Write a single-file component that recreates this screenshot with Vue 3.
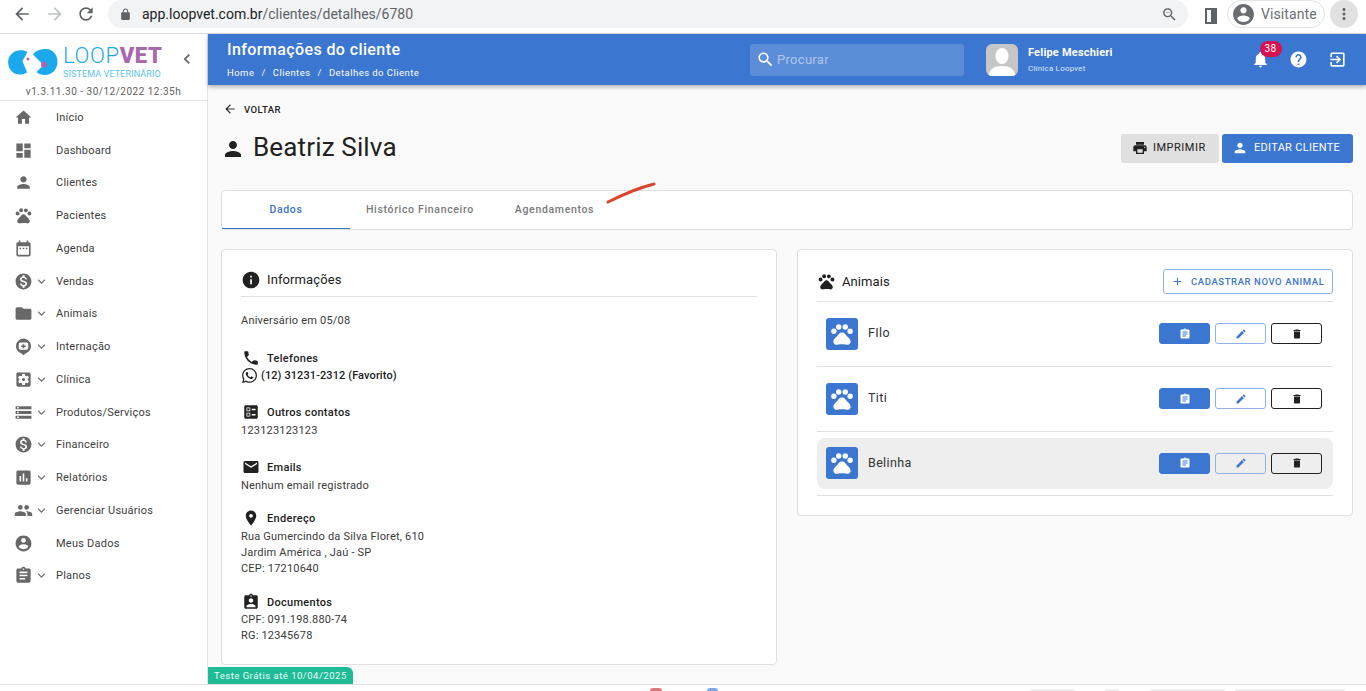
<template>
  <div class="page">
    <div class="browser-bar">
      <svg class="nav-icon" viewBox="0 0 24 24"><path :d="icons.back" /></svg>
      <svg class="nav-icon forward" viewBox="0 0 24 24"><path :d="icons.forward" /></svg>
      <svg class="nav-icon reload" viewBox="0 0 24 24"><path :d="icons.refresh" /></svg>
      <div class="omnibox">
        <svg class="lock" viewBox="0 0 24 24"><path :d="icons.lock" /></svg>
        <span class="url">app.loopvet.com.br<span class="url-path">/clientes/detalhes/6780</span></span>
        <svg class="zoom-icon" viewBox="0 0 24 24"><path :d="icons.zoomOut" /></svg>
      </div>
      <span class="side-panel"></span>
      <div class="guest-chip">
        <svg viewBox="0 0 24 24"><path :d="icons.account" /></svg>
        <span>Visitante</span>
      </div>
      <div class="menu-dots">
        <svg viewBox="0 0 24 24"><path :d="icons.more" /></svg>
      </div>
    </div>

    <div class="app">
      <aside class="sidebar">
        <div class="brand">
          <div class="logo-row">
            <svg class="logo-mark" viewBox="0 0 50 28">
              <path d="M19.5 3L14.5 12L19 23.5C15 26 8 27 3.5 22C-1 17-1 9 3.5 5C8 .5 15 .5 19.5 3z" fill="#1ba9ee" />
              <path d="M25 5.5C28 1 34 0 38 0C45 0 49.5 6 49.5 13C49.5 20 44 26 37 26C33.5 26 30.5 25 28.5 23L35.5 16z" fill="#1ba9ee" />
              <circle cx="20" cy="10" r="1.5" fill="#a768ad" />
              <circle cx="36" cy="15.5" r="3" fill="#a768ad" />
            </svg>
            <div class="logo-text">
              <div class="logo-name">LOOP<b>VET</b></div>
              <div class="logo-sub">SISTEMA VETERINÁRIO</div>
            </div>
            <svg class="collapse" viewBox="0 0 24 24"><path :d="icons.chevronLeft" /></svg>
          </div>
          <div class="version">v1.3.11.30 - 30/12/2022 12:35h</div>
        </div>
        <nav class="menu">
          <div v-for="item in menu" :key="item.label" class="menu-item">
            <svg class="menu-icon" viewBox="0 0 24 24"><path :d="icons[item.icon]" fill-rule="evenodd" /></svg>
            <svg v-if="item.sub" class="menu-chevron" viewBox="0 0 24 24"><path :d="icons.expand" /></svg>
            <span class="menu-label">{{ item.label }}</span>
          </div>
        </nav>
      </aside>

      <main class="main">
        <header class="topbar">
          <div class="topbar-title">
            <div class="page-title">Informações do cliente</div>
            <div class="crumbs">
              <span>Home</span><i>/</i><span>Clientes</span><i>/</i><span>Detalhes do Cliente</span>
            </div>
          </div>
          <div class="search">
            <svg viewBox="0 0 24 24"><path :d="icons.search" /></svg>
            <span>Procurar</span>
          </div>
          <div class="avatar">
            <svg viewBox="0 0 32 32">
              <ellipse cx="16" cy="12" rx="6.5" ry="8" fill="#fff" />
              <path d="M3 32c0-7 5-10 13-10s13 3 13 10z" fill="#fff" />
            </svg>
          </div>
          <div class="user">
            <div class="user-name">Felipe Meschieri</div>
            <div class="user-clinic">Clínica Loopvet</div>
          </div>
          <div class="top-actions">
            <div class="bell">
              <svg viewBox="0 0 24 24"><path :d="icons.bell" /></svg>
              <span class="badge">38</span>
            </div>
            <svg viewBox="0 0 24 24"><path :d="icons.help" /></svg>
            <svg viewBox="0 0 24 24"><path :d="icons.exit" /></svg>
          </div>
        </header>

        <div class="content">
          <div class="back-link">
            <svg viewBox="0 0 24 24"><path :d="icons.back" /></svg>
            <span>VOLTAR</span>
          </div>

          <div class="client-row">
            <svg class="client-icon" viewBox="0 0 24 24"><path :d="icons.person" /></svg>
            <h1 class="client-name">Beatriz Silva</h1>
            <button class="btn btn-grey">
              <svg viewBox="0 0 24 24"><path :d="icons.print" /></svg>IMPRIMIR
            </button>
            <button class="btn btn-blue">
              <svg viewBox="0 0 24 24"><path :d="icons.person" /></svg>EDITAR CLIENTE
            </button>
          </div>

          <div class="tabs">
            <div class="tab active">Dados</div>
            <div class="tab">Histórico Financeiro</div>
            <div class="tab">Agendamentos</div>
            <svg class="scribble" viewBox="0 0 50 22">
              <path d="M2 20C16 13 32 6 48 2" fill="none" stroke="#d9452f" stroke-width="3" stroke-linecap="round" />
            </svg>
          </div>

          <div class="columns">
            <section class="card info-card">
              <div class="card-head">
                <svg viewBox="0 0 24 24"><path :d="icons.info" /></svg>
                <span>Informações</span>
              </div>
              <p class="line birthday">Aniversário em 05/08</p>

              <div class="block">
                <div class="block-head"><svg viewBox="0 0 24 24"><path :d="icons.call" /></svg>Telefones</div>
                <div class="phone">
                  <svg viewBox="0 0 24 24"><path :d="icons.whatsapp" /></svg>(12) 31231-2312 (Favorito)
                </div>
              </div>
              <div class="block">
                <div class="block-head"><svg viewBox="0 0 24 24"><path :d="icons.ballot" /></svg>Outros contatos</div>
                <p class="line">123123123123</p>
              </div>
              <div class="block tight">
                <div class="block-head"><svg viewBox="0 0 24 24"><path :d="icons.email" /></svg>Emails</div>
                <p class="line">Nenhum email registrado</p>
              </div>
              <div class="block near">
                <div class="block-head"><svg viewBox="0 0 24 24"><path :d="icons.place" /></svg>Endereço</div>
                <p class="line">Rua Gumercindo da Silva Floret, 610</p>
                <p class="line">Jardim América , Jaú - SP</p>
                <p class="line">CEP: 17210640</p>
              </div>
              <div class="block docs">
                <div class="block-head"><svg viewBox="0 0 24 24"><path :d="icons.badge" /></svg>Documentos</div>
                <p class="line">CPF: 091.198.880-74</p>
                <p class="line">RG: 12345678</p>
              </div>
            </section>

            <section class="card animals-card">
              <div class="animals-head">
                <svg viewBox="0 0 24 24"><path :d="icons.pets" /></svg>
                <span>Animais</span>
                <button class="btn-new">
                  <svg viewBox="0 0 24 24"><path :d="icons.add" /></svg>CADASTRAR NOVO ANIMAL
                </button>
              </div>
              <div v-for="animal in animals" :key="animal.name" class="animal-wrap">
                <div :class="['animal', { hovered: animal.hovered }]">
                  <div class="animal-icon">
                    <svg viewBox="0 0 24 24"><path :d="icons.pets" /></svg>
                  </div>
                  <span class="animal-name">{{ animal.name }}</span>
                  <div class="animal-actions">
                    <button class="act act-fill"><svg viewBox="0 0 24 24"><path :d="icons.assignment" /></svg></button>
                    <button class="act act-edit"><svg viewBox="0 0 24 24"><path :d="icons.edit" /></svg></button>
                    <button class="act act-del"><svg viewBox="0 0 24 24"><path :d="icons.trash" /></svg></button>
                  </div>
                </div>
              </div>
            </section>
          </div>
        </div>

        <div class="trial">Teste Grátis até 10/04/2025</div>
      </main>
    </div>

    <div class="shelf">
      <i class="peek red"></i>
      <i class="peek blue"></i>
      <i class="peek grey one"></i>
      <i class="peek grey two"></i>
      <i class="peek grey three"></i>
      <i class="peek grey four"></i>
    </div>
  </div>
</template>

<script setup>
const icons = {
  back: 'M20 11H7.83l5.59-5.59L12 4l-8 8 8 8 1.41-1.41L7.83 13H20v-2z',
  forward: 'M12 4l-1.41 1.41L16.17 11H4v2h12.17l-5.58 5.59L12 20l8-8z',
  refresh: 'M17.65 6.35C16.2 4.9 14.21 4 12 4c-4.42 0-7.99 3.58-7.99 8s3.57 8 7.99 8c3.73 0 6.84-2.55 7.73-6h-2.08c-.82 2.33-3.04 4-5.65 4-3.31 0-6-2.69-6-6s2.69-6 6-6c1.66 0 3.14.69 4.22 1.78L13 11h7V4l-2.35 2.35z',
  lock: 'M18 8h-1V6c0-2.76-2.24-5-5-5S7 3.24 7 6v2H6c-1.1 0-2 .9-2 2v10c0 1.1.9 2 2 2h12c1.1 0 2-.9 2-2V10c0-1.1-.9-2-2-2zm-2.9 0H8.9V6c0-1.71 1.39-3.1 3.1-3.1 1.71 0 3.1 1.39 3.1 3.1v2z',
  zoomOut: 'M15.5 14h-.79l-.28-.27C15.41 12.59 16 11.11 16 9.5 16 5.91 13.09 3 9.5 3S3 5.91 3 9.5 5.91 16 9.5 16c1.61 0 3.09-.59 4.23-1.57l.27.28v.79l5 4.99L20.49 19l-4.99-5zm-6 0C7.01 14 5 11.99 5 9.5S7.01 5 9.5 5 14 7.01 14 9.5 11.99 14 9.5 14zM7 9h5v1H7z',
  account: 'M12 2C6.48 2 2 6.48 2 12s4.48 10 10 10 10-4.48 10-10S17.52 2 12 2zm0 3c1.66 0 3 1.34 3 3s-1.34 3-3 3-3-1.34-3-3 1.34-3 3-3zm0 14.2c-2.5 0-4.71-1.28-6-3.22.03-1.99 4-3.08 6-3.08 1.99 0 5.97 1.09 6 3.08-1.29 1.94-3.5 3.22-6 3.22z',
  more: 'M12 8c1.1 0 2-.9 2-2s-.9-2-2-2-2 .9-2 2 .9 2 2 2zm0 2c-1.1 0-2 .9-2 2s.9 2 2 2 2-.9 2-2-.9-2-2-2zm0 6c-1.1 0-2 .9-2 2s.9 2 2 2 2-.9 2-2-.9-2-2-2z',
  search: 'M15.5 14h-.79l-.28-.27C15.41 12.59 16 11.11 16 9.5 16 5.91 13.09 3 9.5 3S3 5.91 3 9.5 5.91 16 9.5 16c1.61 0 3.09-.59 4.23-1.57l.27.28v.79l5 4.99L20.49 19l-4.99-5zm-6 0C7.01 14 5 11.99 5 9.5S7.01 5 9.5 5 14 7.01 14 9.5 11.99 14 9.5 14z',
  bell: 'M12 22c1.1 0 2-.9 2-2h-4c0 1.1.89 2 2 2zm6-6v-5c0-3.07-1.64-5.64-4.5-6.32V4c0-.83-.67-1.5-1.5-1.5s-1.5.67-1.5 1.5v.68C7.63 5.36 6 7.92 6 11v5l-2 2v1h16v-1l-2-2z',
  help: 'M12 2C6.48 2 2 6.48 2 12s4.48 10 10 10 10-4.48 10-10S17.52 2 12 2zm1 17h-2v-2h2v2zm2.07-7.75l-.9.92C13.45 12.9 13 13.5 13 15h-2v-.5c0-1.1.45-2.1 1.17-2.83l1.24-1.26c.37-.36.59-.86.59-1.41 0-1.1-.9-2-2-2s-2 .9-2 2H8c0-2.21 1.79-4 4-4s4 1.79 4 4c0 .88-.36 1.68-.93 2.25z',
  exit: 'M10.09 15.59L11.5 17l5-5-5-5-1.41 1.41L12.67 11H3v2h9.67l-2.58 2.59zM19 3H5c-1.11 0-2 .9-2 2v4h2V5h14v14H5v-4H3v4c0 1.1.89 2 2 2h14c1.1 0 2-.9 2-2V5c0-1.1-.9-2-2-2z',
  home: 'M10 20v-6h4v6h5v-8h3L12 3 2 12h3v8z',
  dashboard: 'M3 13h8V3H3v10zm0 8h8v-6H3v6zm10 0h8V11h-8v10zm0-18v6h8V3h-8z',
  person: 'M12 12c2.21 0 4-1.79 4-4s-1.79-4-4-4-4 1.79-4 4 1.79 4 4 4zm0 2c-2.67 0-8 1.34-8 4v2h16v-2c0-2.66-5.33-4-8-4z',
  pets: 'M2 9.5a2.5 2.5 0 1 0 5 0a2.5 2.5 0 1 0-5 0zM6.5 5.5a2.5 2.5 0 1 0 5 0a2.5 2.5 0 1 0-5 0zM12.5 5.5a2.5 2.5 0 1 0 5 0a2.5 2.5 0 1 0-5 0zM17 9.5a2.5 2.5 0 1 0 5 0a2.5 2.5 0 1 0-5 0zM17.34 14.86c-.87-1.02-1.6-1.89-2.48-2.91-.46-.54-1.05-1.08-1.75-1.32-.11-.04-.22-.07-.33-.09-.25-.04-.52-.04-.78-.04s-.53 0-.79.05c-.11.02-.22.05-.33.09-.7.24-1.28.78-1.75 1.32-.87 1.02-1.6 1.89-2.48 2.91-1.31 1.31-2.92 2.76-2.62 4.79.29 1.02 1.02 2.03 2.33 2.32.73.15 3.06-.44 5.54-.44h.18c2.48 0 4.81.58 5.54.44 1.31-.29 2.04-1.31 2.33-2.32.31-2.04-1.3-3.49-2.61-4.8z',
  calendar: 'M9 11H7v2h2v-2zm4 0h-2v2h2v-2zm4 0h-2v2h2v-2zm2-7h-1V2h-2v2H8V2H6v2H5c-1.11 0-1.99.9-1.99 2L3 20c0 1.1.89 2 2 2h14c1.1 0 2-.9 2-2V6c0-1.1-.9-2-2-2zm0 16H5V9h14v11z',
  money: 'M12 2C6.48 2 2 6.48 2 12s4.48 10 10 10 10-4.48 10-10S17.52 2 12 2zm1.41 16.09V20h-2.67v-1.93c-1.71-.36-3.16-1.46-3.27-3.4h1.96c.1 1.05.82 1.87 2.65 1.87 1.96 0 2.4-.98 2.4-1.59 0-.83-.44-1.61-2.67-2.14-2.48-.6-4.18-1.62-4.18-3.67 0-1.72 1.39-2.84 3.11-3.21V4h2.67v1.95c1.86.45 2.79 1.86 2.85 3.39H14.3c-.05-1.11-.64-1.87-2.22-1.87-1.5 0-2.4.68-2.4 1.64 0 .84.65 1.39 2.67 1.91s4.18 1.39 4.18 3.91c-.01 1.83-1.38 2.83-3.12 3.16z',
  folder: 'M10 4H4c-1.1 0-1.99.9-1.99 2L2 18c0 1.1.9 2 2 2h16c1.1 0 2-.9 2-2V8c0-1.1-.9-2-2-2h-8l-2-2z',
  hospital: 'M12 2a9.5 9.5 0 0 0-3 18.5L12 23l3-2.5A9.5 9.5 0 0 0 12 2zM8 7h8a2 2 0 0 1 2 2v5a2 2 0 0 1-2 2H8a2 2 0 0 1-2-2V9a2 2 0 0 1 2-2zM11 9v1.7H9.2v1.8H11v1.7h2v-1.7h1.8v-1.8H13V9z',
  clinic: 'M12 10c-1.1 0-2 .9-2 2s.9 2 2 2 2-.9 2-2-.9-2-2-2zm7-7H5c-1.11 0-2 .9-2 2v14c0 1.1.89 2 2 2h14c1.11 0 2-.9 2-2V5c0-1.1-.89-2-2-2zm-1.75 9c0 .23-.02.46-.05.68l1.48 1.16c.13.11.17.3.08.45l-1.4 2.42c-.09.15-.27.21-.43.15l-1.74-.7c-.36.28-.76.51-1.18.69l-.26 1.85c-.03.17-.18.3-.35.3h-2.8c-.17 0-.32-.13-.35-.29l-.26-1.85c-.43-.18-.82-.41-1.18-.69l-1.74.7c-.16.06-.34 0-.43-.15l-1.4-2.42c-.09-.15-.05-.34.08-.45l1.48-1.16c-.03-.23-.05-.46-.05-.69 0-.23.02-.46.05-.68l-1.48-1.16c-.13-.11-.17-.3-.08-.45l1.4-2.42c.09-.15.27-.21.43-.15l1.74.7c.36-.28.76-.51 1.18-.69l.26-1.85c.03-.17.18-.3.35-.3h2.8c.17 0 .32.13.35.29l.26 1.85c.43.18.82.41 1.18.69l1.74-.7c.16-.06.34 0 .43.15l1.4 2.42c.09.15.05.34-.08.45l-1.48 1.16c.03.23.05.46.05.69z',
  storage: 'M2 20h20v-4H2v4zm2-3h2v2H4v-2zM2 4v4h20V4H2zm4 3H4V5h2v2zm-4 7h20v-4H2v4zm2-3h2v2H4v-2z',
  report: 'M19 3H5c-1.1 0-2 .9-2 2v14c0 1.1.9 2 2 2h14c1.1 0 2-.9 2-2V5c0-1.1-.9-2-2-2zM9 17H7v-7h2v7zm4 0h-2V7h2v10zm4 0h-2v-4h2v4z',
  people: 'M16 11c1.66 0 2.99-1.34 2.99-3S17.66 5 16 5c-1.66 0-3 1.34-3 3s1.34 3 3 3zm-8 0c1.66 0 2.99-1.34 2.99-3S9.66 5 8 5C6.34 5 5 6.34 5 8s1.34 3 3 3zm0 2c-2.33 0-7 1.17-7 3.5V19h14v-2.5c0-2.33-4.67-3.5-7-3.5zm8 0c-.29 0-.62.02-.97.05 1.16.84 1.97 1.97 1.97 3.45V19h6v-2.5c0-2.33-4.67-3.5-7-3.5z',
  assignment: 'M19 3h-4.18C14.4 1.84 13.3 1 12 1c-1.3 0-2.4.84-2.82 2H5c-1.1 0-2 .9-2 2v14c0 1.1.9 2 2 2h14c1.1 0 2-.9 2-2V5c0-1.1-.9-2-2-2zm-7 0c.55 0 1 .45 1 1s-.45 1-1 1-1-.45-1-1 .45-1 1-1zm2 14H7v-2h7v2zm3-4H7v-2h10v2zm0-4H7V7h10v2z',
  info: 'M12 2C6.48 2 2 6.48 2 12s4.48 10 10 10 10-4.48 10-10S17.52 2 12 2zm1 15h-2v-6h2v6zm0-8h-2V7h2v2z',
  call: 'M6.62 10.79c1.44 2.83 3.76 5.14 6.59 6.59l2.2-2.2c.27-.27.67-.36 1.02-.24 1.12.37 2.33.57 3.57.57.55 0 1 .45 1 1V20c0 .55-.45 1-1 1-9.39 0-17-7.61-17-17 0-.55.45-1 1-1h3.5c.55 0 1 .45 1 1 0 1.25.2 2.45.57 3.57.11.35.03.74-.25 1.02l-2.2 2.2z',
  whatsapp: 'M17.472 14.382c-.297-.149-1.758-.867-2.03-.967-.273-.099-.471-.148-.67.15-.197.297-.767.966-.94 1.164-.173.199-.347.223-.644.075-.297-.15-1.255-.463-2.39-1.475-.883-.788-1.48-1.761-1.653-2.059-.173-.297-.018-.458.13-.606.134-.133.298-.347.446-.52.149-.174.198-.298.298-.497.099-.198.05-.371-.025-.52-.075-.149-.669-1.612-.916-2.207-.242-.579-.487-.5-.669-.51-.173-.008-.371-.01-.57-.01-.198 0-.52.074-.792.372-.272.297-1.04 1.016-1.04 2.479 0 1.462 1.065 2.875 1.213 3.074.149.198 2.096 3.2 5.077 4.487.709.306 1.262.489 1.694.625.712.227 1.36.195 1.871.118.571-.085 1.758-.719 2.006-1.413.248-.694.248-1.289.173-1.413-.074-.124-.272-.198-.57-.347m-5.421 7.403h-.004a9.87 9.87 0 01-5.031-1.378l-.361-.214-3.741.982.998-3.648-.235-.374a9.86 9.86 0 01-1.51-5.26c.001-5.45 4.436-9.884 9.888-9.884 2.64 0 5.122 1.03 6.988 2.898a9.825 9.825 0 012.893 6.994c-.003 5.45-4.437 9.884-9.885 9.884m8.413-18.297A11.815 11.815 0 0012.05 0C5.495 0 .16 5.335.157 11.892c0 2.096.547 4.142 1.588 5.945L.057 24l6.305-1.654a11.882 11.882 0 005.683 1.448h.005c6.554 0 11.89-5.335 11.893-11.893a11.821 11.821 0 00-3.48-8.413z',
  ballot: 'M13 9.5h5v-2h-5v2zm0 7h5v-2h-5v2zm6 4.5H5c-1.1 0-2-.9-2-2V5c0-1.1.9-2 2-2h14c1.1 0 2 .9 2 2v14c0 1.1-.9 2-2 2zM6 11h5V6H6v5zm1-4h3v3H7V7zM6 18h5v-5H6v5zm1-4h3v3H7v-3z',
  email: 'M20 4H4c-1.1 0-1.99.9-1.99 2L2 18c0 1.1.9 2 2 2h16c1.1 0 2-.9 2-2V6c0-1.1-.9-2-2-2zm0 4l-8 5-8-5V6l8 5 8-5v2z',
  place: 'M12 2C8.13 2 5 5.13 5 9c0 5.25 7 13 7 13s7-7.75 7-13c0-3.87-3.13-7-7-7zm0 9.5c-1.38 0-2.5-1.12-2.5-2.5s1.12-2.5 2.5-2.5 2.5 1.12 2.5 2.5-1.12 2.5-2.5 2.5z',
  badge: 'M19 3h-4.18C14.4 1.84 13.3 1 12 1c-1.3 0-2.4.84-2.82 2H5c-1.1 0-2 .9-2 2v14c0 1.1.9 2 2 2h14c1.1 0 2-.9 2-2V5c0-1.1-.9-2-2-2zm-7 0c.55 0 1 .45 1 1s-.45 1-1 1-1-.45-1-1 .45-1 1-1zm0 4c1.66 0 3 1.34 3 3s-1.34 3-3 3-3-1.34-3-3 1.34-3 3-3zm6 12H6v-1.4c0-2 4-3.1 6-3.1s6 1.1 6 3.1V19z',
  print: 'M19 8H5c-1.66 0-3 1.34-3 3v6h4v4h12v-4h4v-6c0-1.66-1.34-3-3-3zm-3 11H8v-5h8v5zm3-7c-.55 0-1-.45-1-1s.45-1 1-1 1 .45 1 1-.45 1-1 1zm-1-9H6v4h12V3z',
  edit: 'M3 17.25V21h3.75L17.81 9.94l-3.75-3.75L3 17.25zM20.71 7.04c.39-.39.39-1.02 0-1.41l-2.34-2.34c-.39-.39-1.02-.39-1.41 0l-1.83 1.83 3.75 3.75 1.83-1.83z',
  trash: 'M6 19c0 1.1.9 2 2 2h8c1.1 0 2-.9 2-2V7H6v12zM19 4h-3.5l-1-1h-5l-1 1H5v2h14V4z',
  add: 'M19 13h-6v6h-2v-6H5v-2h6V5h2v6h6v2z',
  chevronLeft: 'M15.41 7.41L14 6l-6 6 6 6 1.41-1.41L10.83 12z',
  expand: 'M16.59 8.59L12 13.17 7.41 8.59 6 10l6 6 6-6z'
}

const menu = [
  { label: 'Início', icon: 'home' },
  { label: 'Dashboard', icon: 'dashboard' },
  { label: 'Clientes', icon: 'person' },
  { label: 'Pacientes', icon: 'pets' },
  { label: 'Agenda', icon: 'calendar' },
  { label: 'Vendas', icon: 'money', sub: true },
  { label: 'Animais', icon: 'folder', sub: true },
  { label: 'Internação', icon: 'hospital', sub: true },
  { label: 'Clínica', icon: 'clinic', sub: true },
  { label: 'Produtos/Serviços', icon: 'storage', sub: true },
  { label: 'Financeiro', icon: 'money', sub: true },
  { label: 'Relatórios', icon: 'report', sub: true },
  { label: 'Gerenciar Usuários', icon: 'people', sub: true },
  { label: 'Meus Dados', icon: 'account' },
  { label: 'Planos', icon: 'assignment', sub: true }
]

const animals = [
  { name: 'FIlo' },
  { name: 'Titi' },
  { name: 'Belinha', hovered: true }
]
</script>

<style scoped>
.page {
  width: 1366px;
  height: 691px;
  overflow: hidden;
  display: flex;
  flex-direction: column;
  font-family: Roboto, "Liberation Sans", sans-serif;
  color: #212121;
  background: #fff;
}

svg {
  display: block;
  flex-shrink: 0;
  fill: currentColor;
}

/* browser */
.browser-bar {
  height: 34px;
  flex-shrink: 0;
  display: flex;
  align-items: flex-start;
  background: #fff;
  border-bottom: 1px solid #dadce0;
  box-sizing: border-box;
  color: #5f6368;
}

.nav-icon {
  width: 20px;
  height: 20px;
  margin: 4px 0 0 12px;
}

.nav-icon.forward {
  margin-left: 13px;
  color: #bdc1c6;
}

.nav-icon.reload {
  margin-left: 11px;
}

.omnibox {
  width: 1080px;
  height: 28px;
  margin-left: 12px;
  padding-left: 11px;
  box-sizing: border-box;
  display: flex;
  align-items: center;
  background: #f1f3f4;
  border-radius: 14px;
}

.lock {
  width: 13px;
  height: 13px;
}

.url {
  margin-left: 10px;
  font-size: 14px;
  color: #202124;
}

.url-path {
  color: #5f6368;
}

.zoom-icon {
  width: 17px;
  height: 17px;
  margin-left: auto;
  margin-right: 10px;
}

.side-panel {
  height: 12px;
  margin: 8px 0 0 17px;
  border: 2px solid #5f6368;
  border-right-width: 6px;
  width: 4px;
}

.guest-chip {
  width: 98px;
  height: 28px;
  margin-left: 10px;
  padding-left: 3px;
  box-sizing: border-box;
  display: flex;
  align-items: center;
  border: 1px solid #e3e4e6;
  border-radius: 14px;
  font-size: 14px;
  color: #6a6e73;
  letter-spacing: 0.1px;
}

.guest-chip svg {
  width: 25px;
  height: 25px;
  margin-right: 5px;
}

.menu-dots {
  width: 28px;
  height: 28px;
  margin-left: 5px;
  border-radius: 50%;
  background: #e1e1e1;
  display: flex;
  align-items: center;
  justify-content: center;
}

.menu-dots svg {
  width: 18px;
  height: 18px;
}

.app {
  flex: 1;
  display: flex;
  min-height: 0;
}

/* sidebar */
.sidebar {
  width: 208px;
  flex-shrink: 0;
  box-sizing: border-box;
  border-right: 1px solid #e4e4e4;
  background: #fff;
}

.brand {
  height: 67px;
  box-sizing: border-box;
  border-bottom: 1px solid #e4e4e4;
}

.logo-row {
  height: 51px;
  box-sizing: border-box;
  display: flex;
  align-items: flex-start;
  padding: 15px 0 0 8px;
}

.logo-mark {
  width: 50px;
  height: 28px;
}

.logo-text {
  margin: -6px 0 0 5px;
}

.logo-name {
  font-size: 22px;
  line-height: 26px;
  font-weight: 300;
  letter-spacing: 0.6px;
  color: #1ba9ee;
  white-space: nowrap;
}

.logo-name b {
  font-weight: 900;
  color: #a768ad;
}

.logo-sub {
  font-size: 9px;
  line-height: 11px;
  letter-spacing: 0.12px;
  color: #5cc4f2;
  white-space: nowrap;
}

.collapse {
  width: 20px;
  height: 20px;
  margin: 0 0 0 15px;
  color: #616161;
}

.version {
  text-align: center;
  font-size: 10px;
  line-height: 14px;
  letter-spacing: 0.5px;
  color: #616161;
}

.menu-item {
  height: 32.75px;
  display: flex;
  align-items: center;
  padding-left: 14px;
  position: relative;
}

.menu-icon {
  width: 19px;
  height: 19px;
  color: #686868;
}

.menu-chevron {
  position: absolute;
  left: 34px;
  width: 15px;
  height: 15px;
  color: #757575;
}

.menu-label {
  position: absolute;
  left: 56px;
  font-size: 11px;
  letter-spacing: 0.23px;
  color: #3d3d3d;
  white-space: nowrap;
}

/* main */
.main {
  flex: 1;
  min-width: 0;
  position: relative;
  display: flex;
  flex-direction: column;
  background: #fafafa;
}

.topbar {
  height: 51px;
  flex-shrink: 0;
  display: flex;
  align-items: center;
  padding-left: 19px;
  background: #3b76d1;
  color: #fff;
  box-shadow: 0 2px 4px rgba(0, 0, 0, 0.3);
  position: relative;
  z-index: 2;
}

.topbar-title {
  width: 523px;
  flex-shrink: 0;
}

.page-title {
  font-size: 16px;
  line-height: 20px;
  font-weight: 500;
  letter-spacing: 0.4px;
}

.crumbs {
  margin-top: 7px;
  display: flex;
  font-size: 9.5px;
  line-height: 12px;
  letter-spacing: 0.45px;
}

.crumbs i {
  font-style: normal;
  margin: 0 7px;
}

.search {
  width: 214px;
  height: 32px;
  flex-shrink: 0;
  display: flex;
  align-items: center;
  padding-left: 6px;
  box-sizing: border-box;
  background: rgba(255, 255, 255, 0.17);
  border-radius: 3px;
  font-size: 13px;
  letter-spacing: 0.3px;
  color: rgba(255, 255, 255, 0.5);
}

.search svg {
  width: 19px;
  height: 19px;
  margin-right: 2px;
  color: #fff;
}

.avatar {
  width: 32px;
  height: 32px;
  margin-left: 22px;
  flex-shrink: 0;
  background: #c6c6c6;
  border-radius: 6px;
  overflow: hidden;
}

.user {
  margin-left: 10px;
}

.user-name {
  font-size: 11px;
  line-height: 14px;
  font-weight: 700;
  letter-spacing: 0.2px;
}

.user-clinic {
  margin-top: 4px;
  font-size: 8px;
  line-height: 10px;
  color: #dfe9f8;
  letter-spacing: 0.2px;
}

.top-actions {
  margin-left: auto;
  margin-right: 19.5px;
  display: flex;
  align-items: center;
  gap: 19.5px;
}

.top-actions svg {
  width: 19px;
  height: 19px;
}

.bell {
  position: relative;
}

.badge {
  position: absolute;
  left: 9px;
  top: -9px;
  width: 22px;
  height: 16px;
  background: #d5114f;
  border-radius: 8px;
  font-size: 10px;
  line-height: 16px;
  text-align: center;
  letter-spacing: 0.3px;
}

.content {
  flex: 1;
  min-height: 0;
  padding: 17px 13px 0;
}

.back-link {
  height: 14px;
  display: flex;
  align-items: center;
  font-size: 9.5px;
  font-weight: 500;
  letter-spacing: 0.45px;
  color: #212121;
}

.back-link svg {
  width: 14px;
  height: 14px;
  margin: 0 7px 0 2px;
  color: #333;
}

.client-row {
  margin-top: 18px;
  height: 29px;
  display: flex;
  align-items: center;
}

.client-icon {
  width: 24px;
  height: 24px;
  margin-right: 8px;
}

.client-name {
  margin: 0 0 2px;
  font-size: 26px;
  line-height: 27px;
  font-weight: 400;
  letter-spacing: 0.15px;
  color: #212121;
}

.btn {
  height: 29px;
  border: 0;
  border-radius: 3px;
  display: flex;
  align-items: center;
  padding: 0 0 2px 11px;
  font-family: inherit;
  font-size: 11px;
  font-weight: 400;
  letter-spacing: 0.5px;
  white-space: nowrap;
}

.btn svg {
  width: 16px;
  height: 16px;
  margin-right: 5px;
}

.btn-grey {
  margin-left: auto;
  width: 98px;
  background: #e0e0e0;
  color: #212121;
}

.btn-blue {
  margin-left: 3px;
  width: 131px;
  background: #3b76d1;
  color: #fff;
  padding-left: 10px;
  letter-spacing: 0.3px;
}

.btn-blue svg {
  margin-right: 6px;
}

.tabs {
  position: relative;
  margin-top: 27px;
  height: 40px;
  box-sizing: border-box;
  display: flex;
  background: #fff;
  border: 1px solid #e0e0e0;
  border-radius: 4px;
}

.tab {
  height: 38px;
  box-sizing: border-box;
  display: flex;
  align-items: center;
  padding: 0 25px 1px 16px;
  font-size: 10.5px;
  font-weight: 500;
  letter-spacing: 0.67px;
  color: #7a7a7a;
}

.tab.active {
  width: 128px;
  padding: 0;
  justify-content: center;
  color: #3b76d1;
  border-bottom: 1px solid #3b76d1;
}

.scribble {
  position: absolute;
  left: 384px;
  top: -9px;
  width: 50px;
  height: 22px;
}

.columns {
  margin-top: 19px;
  display: grid;
  grid-template-columns: 1fr 1fr;
  gap: 20px;
  align-items: start;
}

.card {
  background: #fff;
  border: 1px solid #e0e0e0;
  border-radius: 4px;
  box-sizing: border-box;
}

.info-card {
  height: 416px;
  padding: 20px 19px 0;
}

.card-head {
  height: 26px;
  display: flex;
  align-items: flex-start;
  border-bottom: 1px solid #e0e0e0;
  font-size: 13px;
  line-height: 20px;
  letter-spacing: 0.1px;
}

.card-head svg {
  width: 20px;
  height: 20px;
  margin-right: 6px;
}

.line {
  margin: 0;
  font-size: 11px;
  line-height: 16px;
  letter-spacing: 0.2px;
  color: #3a3a3a;
}

.birthday {
  margin-top: 16px;
}

.block {
  margin-top: 21px;
}

.block.tight {
  margin-top: 20px;
}

.block.near {
  margin-top: 16px;
}

.block.docs {
  margin-top: 17px;
}

.block-head {
  height: 16px;
  margin-bottom: 3px;
  display: flex;
  align-items: center;
  font-size: 11px;
  font-weight: 500;
  letter-spacing: 0.3px;
  color: #212121;
}

.block.docs .block-head {
  margin-bottom: 2px;
}

.block-head svg {
  width: 18px;
  height: 18px;
  margin: 0 7px 0 1px;
}

.phone {
  display: flex;
  align-items: center;
  height: 16px;
  margin-top: -2px;
  font-size: 11px;
  font-weight: 500;
  letter-spacing: 0.1px;
}

.phone svg {
  width: 15px;
  height: 15px;
  margin: 0 4px 0 1px;
}

.animals-card {
  padding: 19px 19px 19px;
}

.animals-head {
  height: 32px;
  display: flex;
  align-items: flex-start;
  border-bottom: 1px solid #e0e0e0;
  font-size: 13px;
  line-height: 26px;
  letter-spacing: 0.1px;
}

.animals-head > svg {
  width: 19px;
  height: 19px;
  margin: 3px 6px 0 0;
}

.btn-new {
  margin-left: auto;
  width: 170px;
  height: 25px;
  display: flex;
  align-items: center;
  padding: 0 0 0 7px;
  box-sizing: border-box;
  background: #fff;
  border: 1px solid #8fb2e6;
  border-radius: 3px;
  color: #3b76d1;
  font-family: inherit;
  font-size: 9.5px;
  font-weight: 500;
  letter-spacing: 0.6px;
}

.btn-new svg {
  width: 13px;
  height: 13px;
  margin-right: 7px;
}

.animal-wrap {
  padding: 6.375px 0;
  border-bottom: 1px solid #e0e0e0;
}

.animal {
  height: 51px;
  display: flex;
  align-items: center;
  padding: 0 11px 0 9px;
  border-radius: 8px;
}

.animal.hovered {
  background: #eee;
}

.animal-icon {
  width: 32px;
  height: 32px;
  flex-shrink: 0;
  display: flex;
  align-items: center;
  justify-content: center;
  background: #3b76d1;
  border-radius: 3px;
  color: #fff;
}

.animal-icon svg {
  width: 26px;
  height: 26px;
}

.animal-name {
  margin: -2px 0 0 10px;
  font-size: 12.5px;
  letter-spacing: 0.35px;
  color: #333;
}

.animal-actions {
  margin-left: auto;
  display: flex;
  gap: 5px;
}

.act {
  width: 51px;
  height: 21px;
  padding: 0;
  box-sizing: border-box;
  display: flex;
  align-items: center;
  justify-content: center;
  border-radius: 3px;
  background: transparent;
}

.act svg {
  width: 12px;
  height: 12px;
}

.act-fill {
  background: #3b76d1;
  border: 1px solid #3b76d1;
  color: #fff;
}

.act-edit {
  border: 1px solid #8fb2e6;
  color: #3b76d1;
}

.act-del {
  border: 1px solid #212121;
  color: #212121;
}

.trial {
  position: absolute;
  left: 0;
  bottom: 0;
  width: 145px;
  height: 17px;
  background: #1fbb97;
  border-radius: 0 6px 0 0;
  color: #e9fff9;
  font-size: 9.5px;
  line-height: 17px;
  letter-spacing: 0.5px;
  padding-left: 6px;
  box-sizing: border-box;
  z-index: 1;
}

.shelf {
  height: 7px;
  flex-shrink: 0;
  box-sizing: border-box;
  border-top: 1px solid #e6e6e6;
  background: #fff;
  position: relative;
}

.peek {
  position: absolute;
  bottom: 0;
  height: 3px;
  border-radius: 3px 3px 0 0;
}

.peek.red {
  left: 650px;
  width: 12px;
  background: #e0747a;
}

.peek.blue {
  left: 707px;
  width: 11px;
  background: #7fa7e6;
}

.peek.grey {
  background: #eee;
  height: 2px;
}

.peek.one { left: 1030px; width: 45px; }
.peek.two { left: 1105px; width: 14px; }
.peek.three { left: 1150px; width: 75px; }
.peek.four { left: 1235px; width: 110px; }
</style>

<style>
html, body {
  margin: 0;
  overflow: hidden;
}
</style>
